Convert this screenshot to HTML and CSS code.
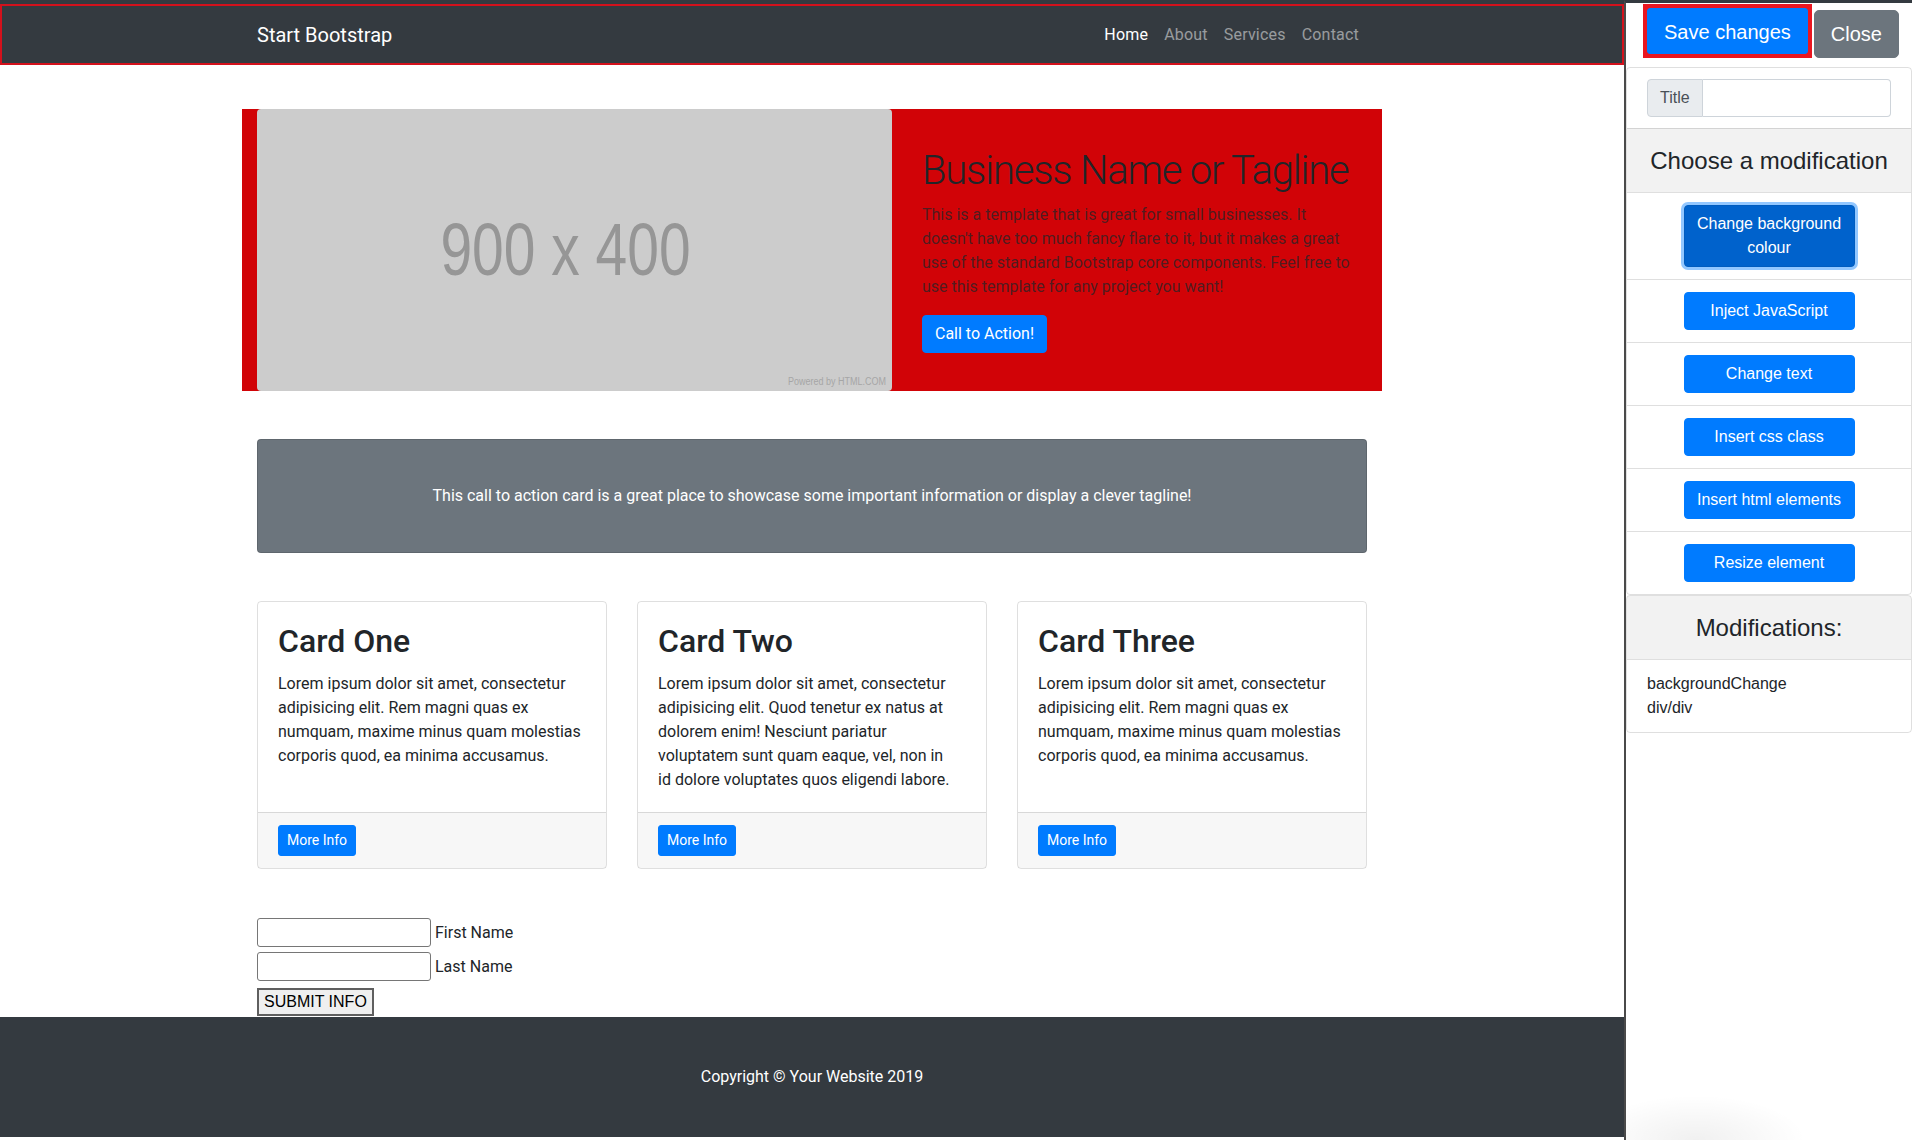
FILE: index.html
```html
<!DOCTYPE html>
<html lang="en">
<head>
<meta charset="utf-8">
<title>Business Frontpage</title>
<link rel="stylesheet" href="styles.css">
</head>
<body>
<div class="app">
  <div class="main">
    <nav class="navbar">
      <div class="nav-select">
        <div class="container nav-inner">
          <a class="brand" href="#">Start Bootstrap</a>
          <ul class="nav-links">
            <li><a class="nav-link active" href="#">Home</a></li>
            <li><a class="nav-link" href="#">About</a></li>
            <li><a class="nav-link" href="#">Services</a></li>
            <li><a class="nav-link" href="#">Contact</a></li>
          </ul>
        </div>
      </div>
    </nav>

    <div class="container">
      <div class="hero">
        <div class="hero-img-col">
          <div class="placeholder">
            <span class="ph-text">900 x 400</span>
            <span class="ph-credit">Powered by HTML.COM</span>
          </div>
        </div>
        <div class="hero-text-col">
          <h1 class="hero-title">Business Name or Tagline</h1>
          <p class="hero-lead">This is a template that is great for small businesses. It<br>doesn't have too much fancy flare to it, but it makes a great<br>use of the standard Bootstrap core components. Feel free to<br>use this template for any project you want!</p>
          <a class="btn btn-primary" href="#">Call to Action!</a>
        </div>
      </div>

      <div class="cta-card">
        <div class="cta-body">
          <p>This call to action card is a great place to showcase some important information or display a clever tagline!</p>
        </div>
      </div>

      <div class="cards">
        <div class="card-col">
          <div class="card">
            <div class="card-body">
              <h2 class="card-title">Card One</h2>
              <p class="card-text">Lorem ipsum dolor sit amet, consectetur adipisicing elit. Rem magni quas ex numquam, maxime minus quam molestias corporis quod, ea minima accusamus.</p>
            </div>
            <div class="card-footer"><a class="btn btn-primary btn-sm" href="#">More Info</a></div>
          </div>
        </div>
        <div class="card-col">
          <div class="card">
            <div class="card-body">
              <h2 class="card-title">Card Two</h2>
              <p class="card-text">Lorem ipsum dolor sit amet, consectetur adipisicing elit. Quod tenetur ex natus at dolorem enim! Nesciunt pariatur voluptatem sunt quam eaque, vel, non in<br>id dolore voluptates quos eligendi labore.</p>
            </div>
            <div class="card-footer"><a class="btn btn-primary btn-sm" href="#">More Info</a></div>
          </div>
        </div>
        <div class="card-col">
          <div class="card">
            <div class="card-body">
              <h2 class="card-title">Card Three</h2>
              <p class="card-text">Lorem ipsum dolor sit amet, consectetur adipisicing elit. Rem magni quas ex numquam, maxime minus quam molestias corporis quod, ea minima accusamus.</p>
            </div>
            <div class="card-footer"><a class="btn btn-primary btn-sm" href="#">More Info</a></div>
          </div>
        </div>
      </div>

      <form class="name-form">
        <div class="form-row first"><input class="text-input" type="text"><label>First Name</label></div>
        <div class="form-row"><input class="text-input" type="text"><label>Last Name</label></div>
        <button class="submit-btn" type="button">SUBMIT INFO</button>
      </form>
    </div>

    <footer class="footer">
      <p>Copyright &copy; Your Website 2019</p>
    </footer>
  </div>

  <aside class="sidebar">
    <div class="sidebar-top">
      <span class="focus-ring"><button class="side-btn-lg save" type="button">Save changes</button></span>
      <button class="side-btn-lg close" type="button">Close</button>
    </div>

    <div class="side-card">
      <div class="title-wrap">
        <div class="input-group">
          <span class="addon">Title</span>
          <input class="group-input" type="text">
        </div>
      </div>
      <div class="side-header">Choose a modification</div>
      <div class="list-item"><button class="mod-btn active" type="button">Change background colour</button></div>
      <div class="list-item"><button class="mod-btn" type="button">Inject JavaScript</button></div>
      <div class="list-item"><button class="mod-btn" type="button">Change text</button></div>
      <div class="list-item"><button class="mod-btn" type="button">Insert css class</button></div>
      <div class="list-item"><button class="mod-btn" type="button">Insert html elements</button></div>
      <div class="list-item"><button class="mod-btn" type="button">Resize element</button></div>
    </div>

    <div class="side-card">
      <div class="side-header first">Modifications:</div>
      <div class="list-item left">backgroundChange<br>div/div</div>
    </div>
  </aside>
</div>
</body>
</html>
```

FILE: styles.css
```css
* { box-sizing: border-box; }

html, body {
  margin: 0;
  padding: 0;
}

body {
  font-family: Roboto, "Noto Sans", "Liberation Sans", sans-serif;
  font-size: 16px;
  line-height: 24px;
  color: #212529;
  background: #fff;
}

.app {
  display: flex;
  min-height: 100vh;
}

.main {
  width: 1624px;
  flex: 0 0 1624px;
}

.container {
  width: 1140px;
  margin: 0 auto;
  padding: 0 15px;
}

/* Navbar */
.navbar {
  background: #343a40;
  padding-top: 4px;
}

.nav-select {
  border: 2px solid #d3111c;
  height: 61px;
}

.nav-inner {
  height: 57px;
  display: flex;
  align-items: center;
  justify-content: space-between;
}

.brand {
  color: #fff;
  font-size: 20px;
  line-height: 30px;
  text-decoration: none;
}

.nav-links {
  display: flex;
  list-style: none;
  margin: 0;
  padding: 0;
}

.nav-link {
  display: block;
  padding: 8px;
  color: rgba(255, 255, 255, 0.5);
  text-decoration: none;
  letter-spacing: 0.2px;
}

.nav-link.active { color: #fff; }

/* Hero */
.hero {
  display: flex;
  align-items: center;
  background: #d10307;
  margin: 44px -15px 48px;
}

.hero-img-col {
  width: 665px;
  padding: 0 15px;
}

.placeholder {
  position: relative;
  height: 282px;
  background: #cccccc;
  border-radius: 4px;
  display: flex;
  align-items: center;
  justify-content: center;
}

.ph-text {
  font-family: "Liberation Sans", Arial, sans-serif;
  font-size: 74px;
  line-height: 1;
  color: #969696;
  display: inline-block;
  transform: scaleX(0.77);
  margin-right: 18px;
}

.ph-credit {
  position: absolute;
  right: 6px;
  bottom: 3px;
  font-family: "Liberation Sans", Arial, sans-serif;
  font-size: 10px;
  line-height: 12px;
  color: #a6a6a6;
  transform: scaleX(0.9);
  transform-origin: right center;
}

.hero-text-col {
  width: 475px;
  padding: 0 15px;
}

.hero-title {
  font-size: 40px;
  font-weight: 300;
  line-height: 1.2;
  letter-spacing: -0.03em;
  white-space: nowrap;
  margin: 0 0 8px;
  color: #212529;
}

.hero-lead {
  margin: 0 0 16px;
  white-space: nowrap;
  color: rgba(33, 37, 41, 0.74);
}

/* Buttons */
.btn {
  display: inline-block;
  padding: 6px 12px;
  font-size: 16px;
  line-height: 24px;
  border: 1px solid transparent;
  border-radius: 4px;
  text-decoration: none;
}

.btn-primary {
  color: #fff;
  background: #007bff;
  border-color: #007bff;
}

.btn-sm {
  padding: 4px 8px;
  font-size: 14px;
  line-height: 21px;
  border-radius: 3px;
}

/* CTA card */
.cta-card {
  background: #6c757d;
  border: 1px solid rgba(0, 0, 0, 0.125);
  border-radius: 4px;
  padding: 24px 0;
  text-align: center;
  margin-bottom: 48px;
}

.cta-body { padding: 20px; }

.cta-body p {
  margin: 0;
  color: #fff;
}

/* Cards */
.cards {
  display: flex;
  margin: 0 -15px;
}

.card-col {
  width: 380px;
  padding: 0 15px;
  margin-bottom: 48px;
}

.card {
  height: 100%;
  display: flex;
  flex-direction: column;
  border: 1px solid rgba(0, 0, 0, 0.125);
  border-radius: 4px;
}

.card-body {
  flex: 1;
  padding: 20px;
}

.card-title {
  font-size: 32px;
  font-weight: 500;
  line-height: 1.2;
  margin: 0 0 12px;
}

.card-text { margin: 0; }

.card-footer {
  padding: 12px 20px;
  background: rgba(0, 0, 0, 0.03);
  border-top: 1px solid rgba(0, 0, 0, 0.125);
}

/* Form */
.name-form {
  display: flex;
  flex-direction: column;
  align-items: flex-start;
  padding-top: 1px;
  padding-bottom: 1px;
}

.form-row {
  display: flex;
  align-items: center;
  margin-top: 5px;
}

.form-row.first { margin-top: 0; }

.text-input {
  width: 174px;
  height: 29px;
  border: 1px solid #767676;
  border-radius: 3px;
  padding: 1px 2px;
  font: inherit;
  background: #fff;
}

.form-row label {
  margin-left: 4px;
}

.submit-btn {
  margin-top: 7px;
  height: 28px;
  padding: 0 5px;
  font-family: "Liberation Sans", Arial, sans-serif;
  font-size: 16px;
  line-height: 24px;
  color: #000;
  background: #efefef;
  border: 2px solid #5f5f5f;
  border-radius: 0;
}

/* Footer */
.footer {
  background: #343a40;
  padding: 48px 0;
}

.footer p {
  margin: 0;
  text-align: center;
  color: #fff;
}

/* Sidebar */
.sidebar {
  flex: 0 0 288px;
  width: 288px;
  border-top: 3px solid #343a40;
  border-left: 2px solid #4a4a4a;
  background: #fff radial-gradient(ellipse 110px 45px at 70px 100%, rgba(0, 0, 0, 0.06), rgba(0, 0, 0, 0)) no-repeat;
  font-family: "Liberation Sans", Arial, Helvetica, sans-serif;
  color: #212529;
}

.sidebar-top {
  display: flex;
  align-items: flex-end;
  gap: 2px;
  padding: 1px 0 0 17px;
  margin-bottom: 9px;
}

.focus-ring {
  display: inline-block;
  background: #ea1620;
  padding: 4px;
}

.side-btn-lg {
  display: block;
  font-family: inherit;
  font-size: 20px;
  line-height: 30px;
  color: #fff;
  border: 1px solid transparent;
  border-radius: 5px;
  padding: 7px 16px;
  margin: 0;
}

.side-btn-lg.save {
  background: #007bff;
  border-color: #007bff;
  border-radius: 3px;
  padding: 8px 16px 6px;
}

.side-btn-lg.close {
  background: #6c757d;
  border-color: #6c757d;
  padding: 8px 16px;
}

.side-card {
  border: 1px solid rgba(0, 0, 0, 0.125);
  border-radius: 4px;
}

.title-wrap {
  padding: 11px 20px;
}

.input-group {
  display: flex;
  height: 38px;
}

.addon {
  display: flex;
  align-items: center;
  padding: 6px 12px;
  font-size: 16px;
  line-height: 24px;
  color: #495057;
  background: #e9ecef;
  border: 1px solid #ced4da;
  border-radius: 4px 0 0 4px;
}

.group-input {
  flex: 1;
  min-width: 0;
  border: 1px solid #ced4da;
  border-left: 0;
  border-radius: 0 4px 4px 0;
  font: inherit;
  padding: 6px 12px;
}

.side-header {
  background: rgba(0, 0, 0, 0.05);
  border-top: 1px solid rgba(0, 0, 0, 0.125);
  padding: 17px 20px;
  font-size: 24px;
  line-height: 29px;
  text-align: center;
}

.side-header.first {
  border-top: 0;
  border-radius: 3px 3px 0 0;
  padding-top: 17px;
}

.list-item {
  border-top: 1px solid rgba(0, 0, 0, 0.125);
  padding: 12px 20px;
  text-align: center;
  font-size: 16px;
  line-height: 24px;
}

.list-item.left { text-align: left; }

.mod-btn {
  width: 171px;
  padding: 6px 12px;
  font-family: inherit;
  font-size: 16px;
  line-height: 24px;
  color: #fff;
  background: #007bff;
  border: 1px solid #007bff;
  border-radius: 4px;
  margin: 0;
}

.mod-btn.active {
  background: #0062cc;
  border-color: #005cbf;
  box-shadow: 0 0 0 3px rgba(38, 143, 255, 0.5);
}
```
